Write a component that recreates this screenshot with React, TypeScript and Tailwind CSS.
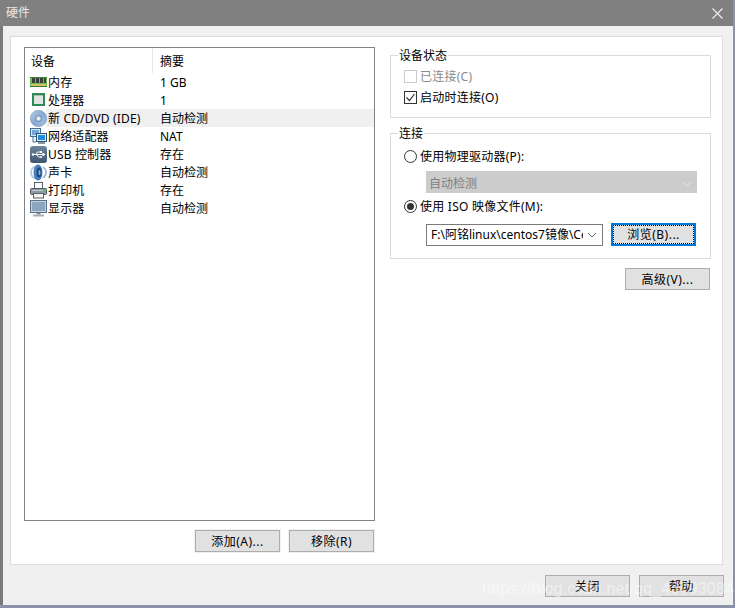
import type { ReactNode } from 'react';

const font = { fontFamily: '"Noto Sans", "Noto Sans CJK SC", sans-serif' };

function RamIcon() {
  return (
    <svg width="17" height="16" viewBox="0 0 17 16">
      <rect x="0" y="3" width="17" height="10" fill="#6dbb5a" />
      <rect x="0" y="3" width="17" height="1" fill="#3c8a35" />
      <rect x="2" y="4" width="3" height="5" fill="#37403a" />
      <rect x="6" y="4" width="3" height="5" fill="#37403a" />
      <rect x="10" y="4" width="3" height="5" fill="#37403a" />
      <rect x="14" y="4" width="2" height="5" fill="#37403a" />
      <rect x="1" y="10" width="15" height="2" fill="#d5c35c" />
      <rect x="0" y="12" width="17" height="1" fill="#2f7a2a" />
    </svg>
  );
}

function CpuIcon() {
  return (
    <svg width="17" height="16" viewBox="0 0 17 16">
      <rect x="2" y="1" width="13" height="13" fill="#2e8b57" />
      <rect x="4" y="3" width="9" height="9" fill="#dfe6df" />
      <rect x="4" y="3" width="9" height="1" fill="#aebcae" />
    </svg>
  );
}

function DiscIcon() {
  return (
    <svg width="17" height="17" viewBox="0 0 17 17">
      <defs>
        <linearGradient id="disc" x1="0" y1="0" x2="1" y2="1">
          <stop offset="0" stopColor="#bcd3ea" />
          <stop offset="0.5" stopColor="#7fa6d0" />
          <stop offset="1" stopColor="#a5c2e0" />
        </linearGradient>
      </defs>
      <circle cx="8.500" cy="8.500" r="8.200" fill="url(#disc)" stroke="#7395ba" strokeWidth="0.600" />
      <circle cx="8.500" cy="8.500" r="5" fill="none" stroke="#a0bedb" />
      <circle cx="8.500" cy="8.500" r="2.800" fill="#d3e1ef" stroke="#668aaf" />
      <circle cx="8.500" cy="8.500" r="1" fill="#ffffff" />
    </svg>
  );
}

function NetIcon() {
  return (
    <svg width="17" height="17" viewBox="0 0 17 17">
      <rect x="0.500" y="0.500" width="10" height="8" fill="#d9e6f2" stroke="#3f6f96" />
      <rect x="2" y="2" width="7" height="5" fill="#6fa8d8" />
      <path d="M3 9v5h3" fill="none" stroke="#3f6f96" />
      <rect x="6.500" y="5.500" width="10" height="8" fill="#dfeaf4" stroke="#31506e" />
      <rect x="8" y="7" width="7" height="5" fill="#1c8de0" />
      <rect x="8" y="14" width="7" height="2" fill="#8a97a5" />
    </svg>
  );
}

function UsbIcon() {
  return (
    <svg width="17" height="17" viewBox="0 0 17 17">
      <defs>
        <linearGradient id="usb" x1="0" y1="0" x2="0" y2="1">
          <stop offset="0" stopColor="#6f879e" />
          <stop offset="1" stopColor="#3c5671" />
        </linearGradient>
      </defs>
      <rect x="0" y="0" width="17" height="17" rx="3" fill="url(#usb)" />
      <path d="M3 8.500h10M5.500 8.500l2-2.500h2.500M6.500 8.500l2 2.500h2" fill="none" stroke="#fff" strokeWidth="1" />
      <path d="M12.500 6.500l3 2-3 2Z" fill="#fff" />
      <circle cx="3" cy="8.500" r="1.300" fill="#fff" />
      <rect x="10" y="5" width="2" height="2" fill="#fff" />
      <circle cx="11" cy="11" r="1" fill="#fff" />
    </svg>
  );
}

function SoundIcon() {
  return (
    <svg width="17" height="17" viewBox="0 0 17 17">
      <path d="M5 2.500C2 4 1 6 1 8.500s1 4.500 4 6" fill="none" stroke="#a8c6e6" strokeWidth="1.500" />
      <ellipse cx="8" cy="8.500" rx="4.500" ry="8" fill="#4a80c0" />
      <ellipse cx="9" cy="8.500" rx="2.500" ry="5" fill="#1f4a80" />
      <ellipse cx="9.500" cy="8.500" rx="1" ry="2.500" fill="#8fb8e0" />
      <path d="M13 3c2 1.500 3 3.300 3 5.500s-1 4-3 5.500" fill="none" stroke="#8fb2d8" strokeWidth="1.500" />
    </svg>
  );
}

function PrinterIcon() {
  return (
    <svg width="17" height="17" viewBox="0 0 17 17">
      <rect x="4.500" y="0.500" width="8" height="6" fill="#fbfbfb" stroke="#59636d" />
      <rect x="0.500" y="6.500" width="16" height="6" rx="1" fill="#8e99a3" stroke="#4f5a64" />
      <rect x="2" y="8" width="13" height="1" fill="#c3cbd2" />
      <rect x="13" y="8" width="2" height="1.500" fill="#54c24e" />
      <rect x="3.500" y="11.500" width="10" height="4.500" fill="#f2f2f2" stroke="#59636d" />
    </svg>
  );
}

function MonitorIcon() {
  return (
    <svg width="17" height="17" viewBox="0 0 17 17">
      <rect x="0.500" y="0.500" width="16" height="12" fill="#c5d2de" stroke="#5e738a" />
      <rect x="2" y="2" width="13" height="9" fill="#8ba6c0" />
      <rect x="6.500" y="13" width="4" height="1.500" fill="#7b8a99" />
      <rect x="3" y="14.500" width="11" height="2" fill="#a4b0bc" />
    </svg>
  );
}

const devices: { icon: ReactNode; name: string; summary: string; selected?: boolean }[] = [
  { icon: <RamIcon />, name: '内存', summary: '1 GB' },
  { icon: <CpuIcon />, name: '处理器', summary: '1' },
  { icon: <DiscIcon />, name: '新 CD/DVD (IDE)', summary: '自动检测', selected: true },
  { icon: <NetIcon />, name: '网络适配器', summary: 'NAT' },
  { icon: <UsbIcon />, name: 'USB 控制器', summary: '存在' },
  { icon: <SoundIcon />, name: '声卡', summary: '自动检测' },
  { icon: <PrinterIcon />, name: '打印机', summary: '存在' },
  { icon: <MonitorIcon />, name: '显示器', summary: '自动检测' },
];

function Btn({ children, className = '' }: { children: ReactNode; className?: string }) {
  return (
    <div className={`flex items-center justify-center w-[85px] h-[22px] pt-px bg-[#e1e1e1] border border-[#adadad] text-[12px] tracking-[0.5px] text-black ${className}`}>
      {children}
    </div>
  );
}

function Check({ checked, disabled, label }: { checked?: boolean; disabled?: boolean; label: string }) {
  return (
    <div className={`flex items-center h-[18px] gap-[3px] ${disabled ? 'text-[#8a8a8a]' : 'text-black'}`}>
      <div className={`flex items-center justify-center w-[13px] h-[13px] bg-white border ${disabled ? 'border-[#cccccc]' : 'border-[#333333]'}`}>
        {checked && (
          <svg width="11" height="11" viewBox="0 0 11 11">
            <path d="M1.500 5.500l3 3 5-6.500" fill="none" stroke="#333333" strokeWidth="1.200" />
          </svg>
        )}
      </div>
      <span className="pt-[2px] tracking-[0.25px]">{label}</span>
    </div>
  );
}

function Radio({ checked, label }: { checked?: boolean; label: string }) {
  return (
    <div className="flex items-center h-[18px] gap-[3px] text-black">
      <div className="flex items-center justify-center w-[13px] h-[13px] rounded-full bg-white border border-[#333333]">
        {checked && <div className="w-[7px] h-[7px] rounded-full bg-[#333333]" />}
      </div>
      <span className="pt-[2px] tracking-[0.25px]">{label}</span>
    </div>
  );
}

function Chevron({ color }: { color: string }) {
  return (
    <svg width="10" height="6" viewBox="0 0 10 6" className="shrink-0">
      <path d="M1 1l4 4 4-4" fill="none" stroke={color} strokeWidth="1" />
    </svg>
  );
}

export default function App() {
  return (
    <div className="relative w-[735px] h-[608px] overflow-hidden bg-[#8a93a8] text-[12px] leading-[18px]" style={font}>
      <div className="w-[733px] h-[605px] flex flex-col border-l-[3px] border-l-[#7a7a7a] bg-[#f0f0f0]">
        {/* Title bar */}
        <div className="flex items-center justify-between h-[26px] -ml-[3px] pl-[6px] pr-[10px] bg-[#808080] text-[#e8e8e8] text-[12px]">
          <span>硬件</span>
          <svg width="11" height="11" viewBox="0 0 11 11">
            <path d="M0.500 0.500l10 10M10.500 0.500l-10 10" stroke="#f0f0f0" strokeWidth="1.100" fill="none" />
          </svg>
        </div>

        {/* Panel */}
        <div className="flex gap-[15px] h-[529px] mt-[10px] ml-[7px] mr-[10px] pt-[10px] pl-[13px] bg-white border border-[#dcdcdc]">
          {/* Left column */}
          <div className="flex flex-col w-[351px]">
            <div className="h-[474px] border border-[#82828c] bg-white">
              <div className="flex h-[25px]">
                <div className="w-[128px] pl-[6px] pt-[5px] border-r border-[#e5e5e5]">设备</div>
                <div className="pl-[7px] pt-[5px]">摘要</div>
              </div>
              {devices.map((d) => (
                <div key={d.name} className="flex items-center h-[18px]">
                  <div className="flex items-center justify-center w-[21px] h-[18px] ml-[3px] -mr-[3px] shrink-0 z-10">{d.icon}</div>
                  <div className={`flex flex-1 h-[18px] pl-[2px] pt-px ${d.selected ? 'bg-[#f0f0f0]' : ''}`}>
                    <span className="w-[112px] whitespace-nowrap tracking-[0.15px]">{d.name}</span>
                    <span>{d.summary}</span>
                  </div>
                </div>
              ))}
            </div>
            <div className="flex justify-end gap-[9px] mt-[9px] pr-px">
              <Btn className="ring-1 ring-[#f0f0f0]">添加(A)...</Btn>
              <Btn className="ring-1 ring-[#f0f0f0]">移除(R)</Btn>
            </div>
          </div>

          {/* Right column */}
          <div className="flex flex-col w-[321px]">
            <fieldset className="h-[71px] border border-[#dcdcdc] pl-[13px] pt-[4px]">
              <legend className="-ml-[6px] px-px h-[16px] leading-[17px] text-black">设备状态</legend>
              <div className="flex flex-col gap-[3px]">
                <Check disabled label="已连接(C)" />
                <Check checked label="启动时连接(O)" />
              </div>
            </fieldset>

            <fieldset className="h-[134px] mt-[7px] border border-[#dcdcdc] pl-[13px] pt-[6px]">
              <legend className="-ml-[6px] px-px h-[16px] leading-[17px] text-black">连接</legend>
              <Radio label="使用物理驱动器(P):" />
              <div className="flex items-center justify-between w-[271px] h-[22px] mt-[6px] ml-[22px] pl-[3px] pr-[5px] pt-[3px] bg-[#cccccc] text-[#7f7f7f]">
                <span>自动检测</span>
                <Chevron color="#e6e6e6" />
              </div>
              <div className="mt-[4px]">
                <Radio checked label="使用 ISO 映像文件(M):" />
              </div>
              <div className="flex items-center gap-[8px] mt-[8px] ml-[22px]">
                <div className="flex items-center w-[177px] h-[22px] pl-[4px] pr-[5px] pt-px bg-white border border-[#7a7a7a]">
                  <span className="w-[152px] overflow-hidden whitespace-nowrap text-black">F:\阿铭linux\centos7镜像\CentOS-7</span>
                  <span className="ml-auto"><Chevron color="#606060" /></span>
                </div>
                <div className="flex items-center justify-center w-[85px] h-[23px] bg-[#e1e1e1] border-2 border-[#0078d7] text-black">
                  <div className="flex items-center justify-center w-full h-full pt-px tracking-[0.5px] border border-dotted border-black">浏览(B)...</div>
                </div>
              </div>
            </fieldset>

            <div className="flex justify-end mt-[9px] pr-px">
              <Btn>高级(V)...</Btn>
            </div>
          </div>
        </div>

        {/* Footer */}
        <div className="flex justify-end gap-[9px] pt-[10px] pr-[9px]">
          <Btn>关闭</Btn>
          <Btn>帮助</Btn>
        </div>
      </div>

      {/* Watermark */}
      <div className="absolute left-[482px] top-[578px] text-[16px] leading-[22px] tracking-[0.2px] text-white/50 whitespace-nowrap" style={{ fontFamily: '"Liberation Sans", sans-serif' }}>
        https://blog.csdn.net/qq_43793084
      </div>
    </div>
  );
}
